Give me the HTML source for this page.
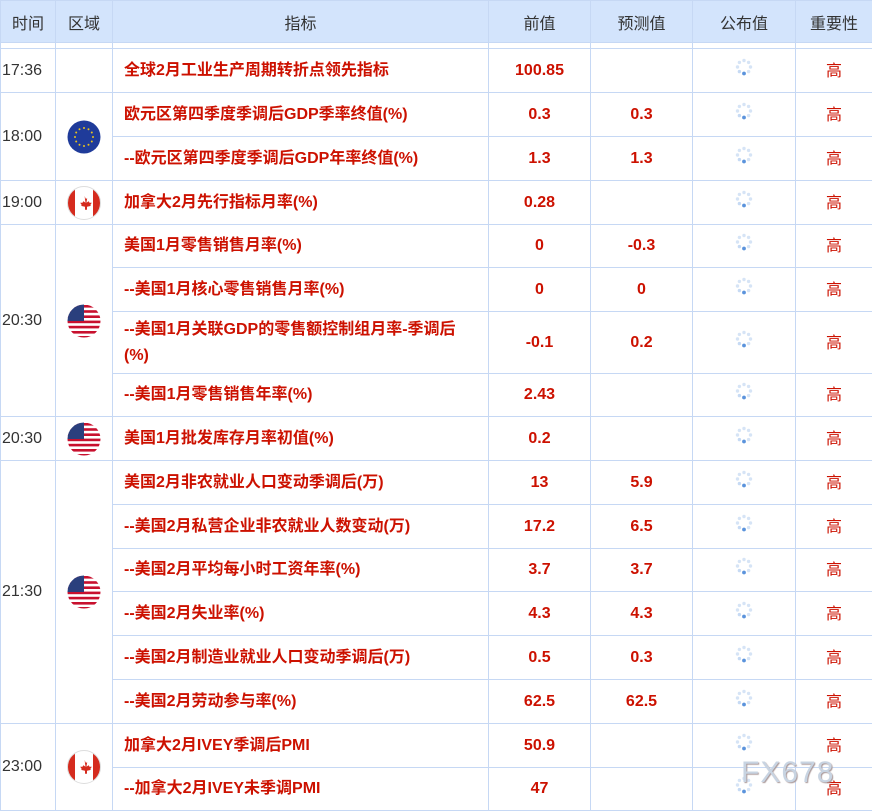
<!DOCTYPE html>
<html><head><meta charset="utf-8"><style>
*{margin:0;padding:0;box-sizing:border-box}
body{width:872px;height:810px;overflow:hidden;background:#fff;font-family:"Liberation Sans","Noto Sans CJK SC",sans-serif;position:relative}
table{border-collapse:collapse;table-layout:fixed;width:872px;position:absolute;top:0;left:0}
td,th{border:1px solid #c6d8f4;text-align:center;vertical-align:middle;padding:0;overflow:hidden}
th{background:#d3e4fc;font-weight:normal;color:#333;font-size:16px;height:42px}
tr.gap td{height:6px;border-top:1px solid #c6d8f4}
td{font-size:16px;color:#cc1100;font-weight:bold}
td.t{color:#333;font-weight:normal;text-align:left;padding-left:1px}
td.n{text-align:left;padding-left:11px;padding-right:22px;line-height:26px}
td.h{font-weight:normal;padding-bottom:4px}
.sp{display:block;width:18px;height:18px;margin:-8px auto 0}
.fx{position:absolute;left:741px;top:756px;font-size:30px;color:#c8d4e2;letter-spacing:1px;text-shadow:1px 1px 1px #a99;font-family:"Liberation Sans",sans-serif}
</style></head><body>
<svg width="0" height="0" style="position:absolute"><defs>
<g id="s"><circle cx="9" cy="2.5" r="1.7" fill="#d6e4f6"/><circle cx="13.6" cy="4.4" r="1.7" fill="#d6e4f6"/><circle cx="15.5" cy="9" r="1.7" fill="#d6e4f6"/><circle cx="13.6" cy="13.6" r="1.7" fill="#d6e4f6"/><circle cx="9" cy="15.5" r="1.9" fill="#5b93dc"/><circle cx="4.4" cy="13.6" r="1.7" fill="#c6daf4"/><circle cx="2.5" cy="9" r="1.7" fill="#d6e4f6"/><circle cx="4.4" cy="4.4" r="1.7" fill="#d6e4f6"/></g>
<g id="eu"><circle cx="17" cy="17" r="16.5" fill="#1f3b9a"/><g fill="#e8c21d"><circle cx="17" cy="8" r="1"/><circle cx="21.5" cy="9.2" r="1"/><circle cx="24.8" cy="12.5" r="1"/><circle cx="26" cy="17" r="1"/><circle cx="24.8" cy="21.5" r="1"/><circle cx="21.5" cy="24.8" r="1"/><circle cx="17" cy="26" r="1"/><circle cx="12.5" cy="24.8" r="1"/><circle cx="9.2" cy="21.5" r="1"/><circle cx="8" cy="17" r="1"/><circle cx="9.2" cy="12.5" r="1"/><circle cx="12.5" cy="9.2" r="1"/></g></g>
<clipPath id="c"><circle cx="17" cy="17" r="16.5"/></clipPath>
<g id="ca"><g clip-path="url(#c)"><rect width="34" height="34" fill="#fff"/><rect width="8" height="34" fill="#d52b1e"/><rect x="26" width="8" height="34" fill="#d52b1e"/><path d="M17 10l1.6 3 1.6-.8-.8 4.6 2.3-1.6.8 1.6 2.3 0-1.6 2.3.8.8-4 .8 0 3h-2l0-3-4-.8.8-.8-1.6-2.3 2.3 0 .8-1.6 2.3 1.6-.8-4.6 1.6.8z" fill="#d52b1e"/></g><circle cx="17" cy="17" r="16.5" fill="none" stroke="#ddd"/></g>
<g id="us"><g clip-path="url(#c)"><rect width="34" height="34" fill="#fff"/><g fill="#c8102e"><rect y="1" width="34" height="2.6"/><rect y="6.2" width="34" height="2.6"/><rect y="11.4" width="34" height="2.6"/><rect y="16.6" width="34" height="2.6"/><rect y="21.8" width="34" height="2.6"/><rect y="27" width="34" height="2.6"/><rect y="32" width="34" height="2.6"/></g><rect width="17" height="17" fill="#2a3f7d"/></g></g>
</defs></svg>
<table>
<colgroup><col style="width:55px"><col style="width:57px"><col style="width:376px"><col style="width:102px"><col style="width:102px"><col style="width:103px"><col style="width:77px"></colgroup>
<tr><th>时间</th><th>区域</th><th>指标</th><th>前值</th><th>预测值</th><th>公布值</th><th>重要性</th></tr>
<tr class="gap"><td></td><td></td><td></td><td></td><td></td><td></td><td></td></tr>
<tr style="height:44px"><td class="t">17:36</td><td></td><td class="n">全球2月工业生产周期转折点领先指标</td><td>100.85</td><td></td><td><svg class="sp"><use href="#s"/></svg></td><td class="h">高</td></tr>
<tr style="height:44px"><td class="t" rowspan="2">18:00</td><td rowspan="2"><svg width="34" height="34" style="vertical-align:middle"><use href="#eu"/></svg></td><td class="n">欧元区第四季度季调后GDP季率终值(%)</td><td>0.3</td><td>0.3</td><td><svg class="sp"><use href="#s"/></svg></td><td class="h">高</td></tr>
<tr style="height:44px"><td class="n">--欧元区第四季度季调后GDP年率终值(%)</td><td>1.3</td><td>1.3</td><td><svg class="sp"><use href="#s"/></svg></td><td class="h">高</td></tr>
<tr style="height:44px"><td class="t">19:00</td><td><svg width="34" height="34" style="vertical-align:middle"><use href="#ca"/></svg></td><td class="n">加拿大2月先行指标月率(%)</td><td>0.28</td><td></td><td><svg class="sp"><use href="#s"/></svg></td><td class="h">高</td></tr>
<tr style="height:43px"><td class="t" rowspan="4">20:30</td><td rowspan="4"><svg width="34" height="34" style="vertical-align:middle"><use href="#us"/></svg></td><td class="n">美国1月零售销售月率(%)</td><td>0</td><td>-0.3</td><td><svg class="sp"><use href="#s"/></svg></td><td class="h">高</td></tr>
<tr style="height:44px"><td class="n">--美国1月核心零售销售月率(%)</td><td>0</td><td>0</td><td><svg class="sp"><use href="#s"/></svg></td><td class="h">高</td></tr>
<tr style="height:62px"><td class="n">--美国1月关联GDP的零售额控制组月率-季调后(%)</td><td>-0.1</td><td>0.2</td><td><svg class="sp"><use href="#s"/></svg></td><td class="h">高</td></tr>
<tr style="height:43px"><td class="n">--美国1月零售销售年率(%)</td><td>2.43</td><td></td><td><svg class="sp"><use href="#s"/></svg></td><td class="h">高</td></tr>
<tr style="height:44px"><td class="t">20:30</td><td><svg width="34" height="34" style="vertical-align:middle"><use href="#us"/></svg></td><td class="n">美国1月批发库存月率初值(%)</td><td>0.2</td><td></td><td><svg class="sp"><use href="#s"/></svg></td><td class="h">高</td></tr>
<tr style="height:44px"><td class="t" rowspan="6">21:30</td><td rowspan="6"><svg width="34" height="34" style="vertical-align:middle"><use href="#us"/></svg></td><td class="n">美国2月非农就业人口变动季调后(万)</td><td>13</td><td>5.9</td><td><svg class="sp"><use href="#s"/></svg></td><td class="h">高</td></tr>
<tr style="height:44px"><td class="n">--美国2月私营企业非农就业人数变动(万)</td><td>17.2</td><td>6.5</td><td><svg class="sp"><use href="#s"/></svg></td><td class="h">高</td></tr>
<tr style="height:43px"><td class="n">--美国2月平均每小时工资年率(%)</td><td>3.7</td><td>3.7</td><td><svg class="sp"><use href="#s"/></svg></td><td class="h">高</td></tr>
<tr style="height:44px"><td class="n">--美国2月失业率(%)</td><td>4.3</td><td>4.3</td><td><svg class="sp"><use href="#s"/></svg></td><td class="h">高</td></tr>
<tr style="height:44px"><td class="n">--美国2月制造业就业人口变动季调后(万)</td><td>0.5</td><td>0.3</td><td><svg class="sp"><use href="#s"/></svg></td><td class="h">高</td></tr>
<tr style="height:44px"><td class="n">--美国2月劳动参与率(%)</td><td>62.5</td><td>62.5</td><td><svg class="sp"><use href="#s"/></svg></td><td class="h">高</td></tr>
<tr style="height:44px"><td class="t" rowspan="2">23:00</td><td rowspan="2"><svg width="34" height="34" style="vertical-align:middle"><use href="#ca"/></svg></td><td class="n">加拿大2月IVEY季调后PMI</td><td>50.9</td><td></td><td><svg class="sp"><use href="#s"/></svg></td><td class="h">高</td></tr>
<tr style="height:43px"><td class="n">--加拿大2月IVEY未季调PMI</td><td>47</td><td></td><td><svg class="sp"><use href="#s"/></svg></td><td class="h">高</td></tr>
</table>
<div class="fx">FX678</div>
</body></html>
